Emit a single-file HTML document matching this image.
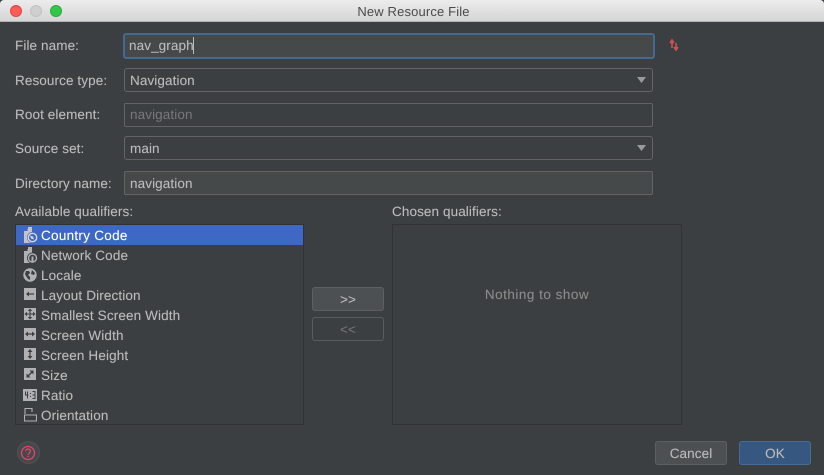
<!DOCTYPE html>
<html><head><meta charset="utf-8">
<style>
html,body{margin:0;padding:0;width:824px;height:475px;overflow:hidden;background:#3c3f41}
*{box-sizing:border-box}
body{font-family:"Liberation Sans",sans-serif;font-size:13.5px;color:#bbbbbb;position:relative;text-rendering:geometricPrecision;text-shadow:0 0 .5px rgba(187,187,187,.5)}
.a{position:absolute;white-space:nowrap}
.t{line-height:16px;letter-spacing:.1px}
.f{position:absolute;left:124px;width:529px;height:24px;border:1px solid #646464;border-radius:2px;background:#45494a;line-height:23px;padding-left:5px;letter-spacing:.1px}
.s{background:#3c3f41;border-radius:3px}
.r{position:absolute;left:41px;line-height:16px;letter-spacing:.13px;white-space:nowrap}
.b{position:absolute;width:72px;height:24px;border-radius:3px;text-align:center;line-height:23px;border:1px solid #5e6060;background:#4c5052;letter-spacing:.1px}
svg{position:absolute;display:block}
</style></head><body>
<div class="a" style="left:0;top:0;width:824px;height:22px;background:linear-gradient(#ececec,#d5d5d5);border-bottom:1px solid #b4b4b4;border-radius:4px 4px 0 0"></div>
<div class="a" style="left:10px;top:5px;width:12px;height:12px;border-radius:50%;background:#fc5b57;border:1px solid #e2463f"></div>
<div class="a" style="left:30px;top:5px;width:12px;height:12px;border-radius:50%;background:#cfcfcf;border:1px solid #c2c2c2"></div>
<div class="a" style="left:50px;top:5px;width:12px;height:12px;border-radius:50%;background:#35c649;border:1px solid #2aac3a"></div>
<div class="a" style="left:0;width:824px;top:4px;text-align:center;font-size:13px;line-height:16px;color:#4a4a4a;letter-spacing:.15px;padding-left:3px;text-shadow:none">New Resource File</div>

<div class="a t" style="left:15px;top:38px">File name:</div>
<div class="a t" style="left:15px;top:73px">Resource type:</div>
<div class="a t" style="left:15px;top:107px">Root element:</div>
<div class="a t" style="left:15px;top:141px">Source set:</div>
<div class="a t" style="left:15px;top:176px">Directory name:</div>

<div class="a" style="left:123px;top:33px;width:532px;height:26px;border:2.500px solid #436a92;border-radius:3px;background:#45494a"></div>
<div class="a" style="left:129px;top:38px;line-height:16px;letter-spacing:.1px;color:#bbb">nav_graph</div>
<div class="a" style="left:193px;top:37px;width:1px;height:17px;background:#bbb"></div>
<svg style="left:668px;top:38px" width="14" height="14" viewBox="0 0 14 14"><path d="M4 3v7M2 5l2-3 2 3" fill="none" stroke="#c75450" stroke-width="1.600"/><path d="M8 5v6M6 9l2 3 2-3" fill="none" stroke="#c75450" stroke-width="1.600"/></svg>

<div class="f s" style="top:68px">Navigation</div>
<svg style="left:636px;top:77px" width="12" height="7" viewBox="0 0 12 7"><path d="M1 0h9L5.500 6z" fill="#9a9a9a"/></svg>
<div class="f" style="top:103px;background:#3c3f41;color:#787878;line-height:22px;text-shadow:none">navigation</div>
<div class="f s" style="top:136px">main</div>
<svg style="left:636px;top:145px" width="12" height="7" viewBox="0 0 12 7"><path d="M1 0h9L5.500 6z" fill="#9a9a9a"/></svg>
<div class="f" style="top:171px">navigation</div>

<div class="a t" style="left:15px;top:204px">Available qualifiers:</div>
<div class="a t" style="left:392px;top:204px">Chosen qualifiers:</div>

<div class="a" style="left:15px;top:224px;width:289px;height:201px;border:1px solid #323232"></div>
<div class="a" style="left:16px;top:225px;width:287px;height:20px;background:#3d68c4"></div>

<svg style="left:24px;top:227px" width="14" height="17" viewBox="0 0 14 17"><path d="M4 0h4v6h-4zM0 4h3.500v-2h4.500v14H0z" fill="#c4c4c4"/><circle cx="8.500" cy="10.500" r="5.500" fill="#3d68c4"/><circle cx="8.500" cy="10.500" r="4.200" fill="none" stroke="#d8d8d8" stroke-width="1.400"/><path d="M6 8.500l3 1 1 3-3-1z" fill="#d8d8d8"/></svg>
<svg style="left:24px;top:247px" width="14" height="17" viewBox="0 0 14 17"><path d="M4 0h4v6h-4zM0 4h3.500v-2h4.500v14H0z" fill="#afb1b3"/><circle cx="8.500" cy="11" r="5.500" fill="#3c3f41"/><circle cx="8.500" cy="11" r="4" fill="none" stroke="#afb1b3" stroke-width="1.400"/><path d="M7.500 9.500h2v5h-2z" fill="#afb1b3"/></svg>
<svg style="left:23px;top:268px" width="14" height="14" viewBox="0 0 14 14"><circle cx="7" cy="7" r="6.700" fill="#afb1b3"/><path d="M3 3h3l1 2-2 2 2 2v3l-2-1-2-3-1-2zM9 2l3 3-1 2-3-1z" fill="#3c3f41"/></svg>

<svg style="left:24px;top:288px" width="12" height="12" viewBox="0 0 12 12"><rect width="12" height="12" fill="#afb1b3"/><path d="M3 6h7" stroke="#3c3f41" stroke-width="1.200"/><path d="M2 6l3-2.500v5z" fill="#3c3f41"/></svg>
<svg style="left:24px;top:308px" width="12" height="12" viewBox="0 0 12 12"><rect width="12" height="12" fill="#afb1b3"/><path d="M6 2v8M2 6h8" stroke="#3c3f41" stroke-width="1.100"/><path d="M6 .500L3.800 3h4.400zM6 11.500L3.800 9h4.400zM.500 6L3 3.800v4.400zM11.500 6L9 3.800v4.400z" fill="#3c3f41"/></svg>
<svg style="left:24px;top:328px" width="12" height="12" viewBox="0 0 12 12"><rect width="12" height="12" fill="#afb1b3"/><path d="M3 6h6" stroke="#3c3f41" stroke-width="1.200"/><path d="M1 6l3-2.500v5zM11 6L8 3.500v5z" fill="#3c3f41"/></svg>
<svg style="left:24px;top:348px" width="12" height="12" viewBox="0 0 12 12"><rect width="12" height="12" fill="#afb1b3"/><path d="M6 3v6" stroke="#3c3f41" stroke-width="1.200"/><path d="M6 1L3.500 4h5zM6 11L3.500 8h5z" fill="#3c3f41"/></svg>
<svg style="left:24px;top:368px" width="12" height="12" viewBox="0 0 12 12"><rect width="12" height="12" fill="#afb1b3"/><path d="M3.500 8.500l5-5" stroke="#3c3f41" stroke-width="1.400"/><path d="M5.500 2.500h4v4zM2.500 5.500v4h4z" fill="#3c3f41"/></svg>
<svg style="left:23px;top:389px" width="14" height="12" viewBox="0 0 14 12"><rect width="14" height="12" fill="#afb1b3"/><path d="M2.500 2.500v3.500h3M4.500 2.500v7M7.500 4v1M7.500 7v1M9.500 2.500h2.500v7h-2.500M9.500 6h2.500" stroke="#3c3f41" fill="none" stroke-width="1"/></svg>
<svg style="left:24px;top:408px" width="13" height="14" viewBox="0 0 13 14"><path d="M1 6V.500h7V4M.500 7h12v6H.500z" fill="none" stroke="#afb1b3" stroke-width="1.100"/></svg>

<div class="r" style="top:228px;color:#fff;letter-spacing:.28px;text-shadow:0 0 .5px rgba(255,255,255,.6)">Country Code</div>
<div class="r" style="top:248px">Network Code</div>
<div class="r" style="top:268px">Locale</div>
<div class="r" style="top:288px">Layout Direction</div>
<div class="r" style="top:308px">Smallest Screen Width</div>
<div class="r" style="top:328px">Screen Width</div>
<div class="r" style="top:348px">Screen Height</div>
<div class="r" style="top:368px">Size</div>
<div class="r" style="top:388px">Ratio</div>
<div class="r" style="top:408px">Orientation</div>

<div class="b" style="left:312px;top:287px;line-height:24px">&gt;&gt;</div>
<div class="b" style="left:312px;top:317px;background:#3c3f41;color:#777;border-color:#5a5d5f;line-height:24px;text-shadow:none">&lt;&lt;</div>

<div class="a" style="left:392px;top:224px;width:290px;height:201px;border:1px solid #323232"></div>
<div class="a t" style="left:392px;width:290px;text-align:center;top:287px;color:#8a8a8a;letter-spacing:.5px;text-shadow:0 0 .5px rgba(138,138,138,.6)">Nothing to show</div>

<div class="a" style="left:17px;top:441px;width:23px;height:23px;border-radius:50%;background:#46494b;border:1px solid #505355"></div>
<svg style="left:20px;top:445px" width="16" height="16" viewBox="0 0 16 16"><circle cx="8" cy="8" r="6.500" fill="none" stroke="#e0476b" stroke-width="1.300"/><path d="M5.700 6.300c0-3 4.700-3 4.700 0 0 1.800-2.300 1.700-2.300 3.600" fill="none" stroke="#e0476b" stroke-width="1.300"/><rect x="7.400" y="10.800" width="1.400" height="1.400" fill="#e0476b"/></svg>

<div class="b" style="left:655px;top:441px">Cancel</div>
<div class="b" style="left:739px;top:441px;background:#365880;border-color:#466d94;color:#bbb">OK</div>
</body></html>
